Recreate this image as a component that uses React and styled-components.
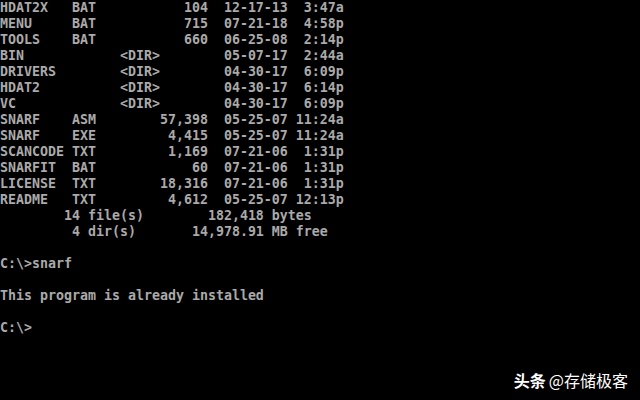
import React from "react";
import styled, { createGlobalStyle } from "styled-components";

const GlobalStyle = createGlobalStyle`
  html, body {
    margin: 0;
    padding: 0;
    background: #000;
  }
`;

// Styled components
const Screen = styled.div`
  position: relative;
  width: 640px;
  height: 400px;
  overflow: hidden;
  background-color: #000;
  color: #aaaaaa;
  font-family: "DejaVu Sans Mono", "Liberation Mono", monospace;
  font-weight: bold;
  font-size: 13.29px;
`;

const Line = styled.div`
  height: 16px;
  line-height: 16px;
  white-space: pre;
`;

const Watermark = styled.div`
  position: absolute;
  right: 12px;
  bottom: 8px;
  display: flex;
  align-items: center;
  gap: 3px;
  color: #fff;
  font-family: "Noto Sans CJK SC", "Noto Sans", sans-serif;
  font-size: 16px;
  text-shadow: 0 0 2px rgba(0, 0, 0, 0.6);
`;

const Brand = styled.span`
  font-weight: 700;
`;

const Handle = styled.span`
  font-weight: 400;
`;

const lines = [
  "HDAT2X   BAT           104  12-17-13  3:47a",
  "MENU     BAT           715  07-21-18  4:58p",
  "TOOLS    BAT           660  06-25-08  2:14p",
  "BIN            <DIR>        05-07-17  2:44a",
  "DRIVERS        <DIR>        04-30-17  6:09p",
  "HDAT2          <DIR>        04-30-17  6:14p",
  "VC             <DIR>        04-30-17  6:09p",
  "SNARF    ASM        57,398  05-25-07 11:24a",
  "SNARF    EXE         4,415  05-25-07 11:24a",
  "SCANCODE TXT         1,169  07-21-06  1:31p",
  "SNARFIT  BAT            60  07-21-06  1:31p",
  "LICENSE  TXT        18,316  07-21-06  1:31p",
  "README   TXT         4,612  05-25-07 12:13p",
  "        14 file(s)        182,418 bytes",
  "         4 dir(s)       14,978.91 MB free",
  "",
  "C:\\>snarf",
  "",
  "This program is already installed",
  "",
  "C:\\>",
];

function App() {
  return (
    <>
      <GlobalStyle />
      <Screen>
        {lines.map((text, i) => (
          <Line key={i}>{text}</Line>
        ))}
        <Watermark>
          <Brand>头条</Brand>
          <Handle>@存储极客</Handle>
        </Watermark>
      </Screen>
    </>
  );
}

export default App;
